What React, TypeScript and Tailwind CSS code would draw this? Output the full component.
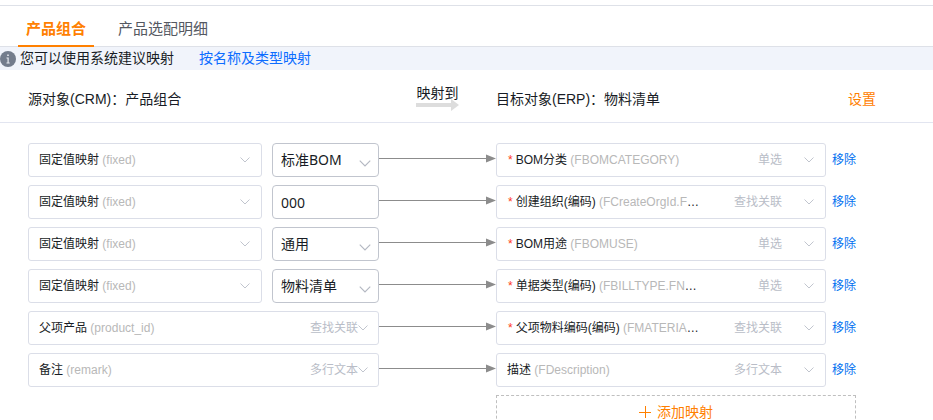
import { ReactNode } from "react";

type Mapping = {
  source: { label: string; code: string; kind?: string };
  value?: { text: string; control: "select" | "input" };
  target: { label: string; code: string; kind: string; required: boolean };
};

const fixed = { label: "固定值映射", code: "fixed" };

const mappings: Mapping[] = [
  {
    source: fixed,
    value: { text: "标准BOM", control: "select" },
    target: { label: "BOM分类", code: "(FBOMCATEGORY)", kind: "单选", required: true },
  },
  {
    source: fixed,
    value: { text: "000", control: "input" },
    target: { label: "创建组织(编码)", code: "(FCreateOrgId.FN)", kind: "查找关联", required: true },
  },
  {
    source: fixed,
    value: { text: "通用", control: "select" },
    target: { label: "BOM用途", code: "(FBOMUSE)", kind: "单选", required: true },
  },
  {
    source: fixed,
    value: { text: "物料清单", control: "select" },
    target: { label: "单据类型(编码)", code: "(FBILLTYPE.FNumber)", kind: "单选", required: true },
  },
  {
    source: { label: "父项产品", code: "product_id", kind: "查找关联" },
    target: { label: "父项物料编码(编码)", code: "(FMATERIALID)", kind: "查找关联", required: true },
  },
  {
    source: { label: "备注", code: "remark", kind: "多行文本" },
    target: { label: "描述", code: "(FDescription)", kind: "多行文本", required: false },
  },
];

function Chevron({ className }: { className: string }) {
  return (
    <svg className={className} viewBox="0 0 10 6" fill="none" stroke="currentColor" aria-hidden="true">
      <path d="M0.5 0.5 5 5 9.5 0.5" />
    </svg>
  );
}

function Field({ name, children }: { name: string; children: ReactNode }) {
  return (
    <button
      type="button"
      aria-haspopup="listbox"
      aria-label={name}
      className="flex h-[34px] min-w-0 flex-1 items-center rounded-[3px] border border-[#dbdee8] bg-white px-[10px] text-left text-xs text-[#181c25]"
    >
      {children}
    </button>
  );
}

function ValueControl({ value }: { value: NonNullable<Mapping["value"]> }) {
  const box =
    "h-[34px] w-full appearance-none rounded-[4px] border border-[#c1c5ce] bg-white px-2 font-['Noto_Sans','Noto_Sans_CJK_SC',sans-serif] text-sm text-[#181c25]";
  if (value.control === "input") {
    return (
      <div className="w-[107px] shrink-0">
        <input aria-label="固定值" className={box} defaultValue={value.text} />
      </div>
    );
  }
  return (
    <div className="relative w-[107px] shrink-0">
      <select aria-label="固定值" className={box} defaultValue={value.text}>
        <option>{value.text}</option>
      </select>
      <Chevron className="pointer-events-none absolute right-2 bottom-[10px] h-[7px] w-3 text-[#b4b8c2]" />
    </div>
  );
}

function Connector() {
  return (
    <div className="flex items-center pb-[3px]" aria-hidden="true">
      <div className="h-px flex-1 bg-[#8c8c8c]" />
      <svg className="h-[9px] w-[10px]" viewBox="0 0 10 9" fill="#8c8c8c">
        <path d="M0 0.5 10 4.5 0 8.5z" />
      </svg>
    </div>
  );
}

function MappingRow({ source, value, target }: Mapping) {
  return (
    <li className="grid grid-cols-[39fr_13fr_40fr]">
      <div className="flex min-w-0 gap-[10px]">
        <Field name={source.label}>
          <span className="min-w-0 flex-1 truncate">
            {source.label} <span className="text-[#b8b8b8]">({source.code})</span>
          </span>
          {source.kind && <span className="text-[#b9bdc7]">{source.kind}</span>}
          <Chevron className={source.kind ? "h-[6px] w-[10px] text-[#c1c5ce]" : "mr-px h-[6px] w-[10px] text-[#c1c5ce]"} />
        </Field>
        {value && <ValueControl value={value} />}
      </div>
      <Connector />
      <div className="flex min-w-0 items-center gap-[6px]">
        <Field name={target.label}>
          {target.required && <span className="mr-[3px] ml-px text-[#ff3a1a]">*</span>}
          <span className="w-[184px] truncate">
            {target.label} <span className="text-[#b8b8b8]">{target.code}</span>
          </span>
          <span className="ml-auto text-[#b9bdc7]">{target.kind}</span>
          <Chevron className="mr-px ml-[22px] h-[6px] w-[10px] shrink-0 text-[#c1c5ce]" />
        </Field>
        <a href="#remove" className="shrink-0 text-xs text-[#0070f0]">
          移除
        </a>
      </div>
    </li>
  );
}

export default function App() {
  return (
    <main className="bg-white pt-[5px] font-['Liberation_Sans','Noto_Sans_CJK_SC',sans-serif] text-sm text-[#181c25]">
      <nav className="flex h-[42px] gap-4 border-y border-[#dee1e8] pl-[18px] text-[15px]" role="tablist">
        <button
          type="button"
          role="tab"
          aria-selected="true"
          className="-mb-px border-b-2 border-[#ff8000] px-2 pt-[6px] font-bold text-[#ff8000]"
        >
          产品组合
        </button>
        <button type="button" role="tab" aria-selected="false" className="px-2 pt-[6px] text-[#545861]">
          产品选配明细
        </button>
      </nav>

      <div className="flex h-[23px] items-center bg-[#f1f4fb]">
        <svg className="mr-1 size-4" viewBox="0 0 16 16" aria-hidden="true">
          <circle cx="8" cy="8" r="8" fill="#737c8c" />
          <path d="M7.2 3.5h1.6v1.6H7.2zM6.5 6.5h2.2v5h1v.9H6.5v-.9h1v-4.1h-1z" fill="#e6e9ef" />
        </svg>
        <span className="-mt-px">您可以使用系统建议映射</span>
        <a href="#auto-map" className="-mt-px ml-[25px] text-[#0c6cff]">
          按名称及类型映射
        </a>
      </div>

      <header className="grid h-[53px] grid-cols-[39fr_13fr_40fr] items-center border-b border-[#e2e5f0] pr-[77px] pl-7 leading-5">
        <h2 className="pt-[6px]">源对象(CRM)：产品组合</h2>
        <div className="flex flex-col items-center pt-[3px]">
          <span className="leading-4">映射到</span>
          <svg className="-mt-[2px] h-3 w-[43px]" viewBox="0 0 43 12" fill="#dddddd" aria-hidden="true">
            <path d="M0 4h35V0l8 6-8 6V8H0z" />
          </svg>
        </div>
        <div className="-mr-5 flex justify-between pt-[6px]">
          <h2>目标对象(ERP)：物料清单</h2>
          <button type="button" className="text-[#ff8000]">
            设置
          </button>
        </div>
      </header>

      <section className="pt-5 pr-[77px] pl-7">
        <ul className="flex flex-col gap-2">
          {mappings.map((mapping) => (
            <MappingRow key={mapping.target.label} {...mapping} />
          ))}
        </ul>
        <div className="mt-2 grid grid-cols-[52fr_40fr]">
          <button
            type="button"
            className="col-start-2 flex h-[34px] items-center justify-center gap-[6px] border border-dashed border-[#bfbfbf] text-[#ff8000]"
          >
            <svg className="size-3" viewBox="0 0 12 12" stroke="currentColor" aria-hidden="true">
              <path d="M0 6.5h12M6.5 0v12" />
            </svg>
            添加映射
          </button>
        </div>
      </section>
    </main>
  );
}
